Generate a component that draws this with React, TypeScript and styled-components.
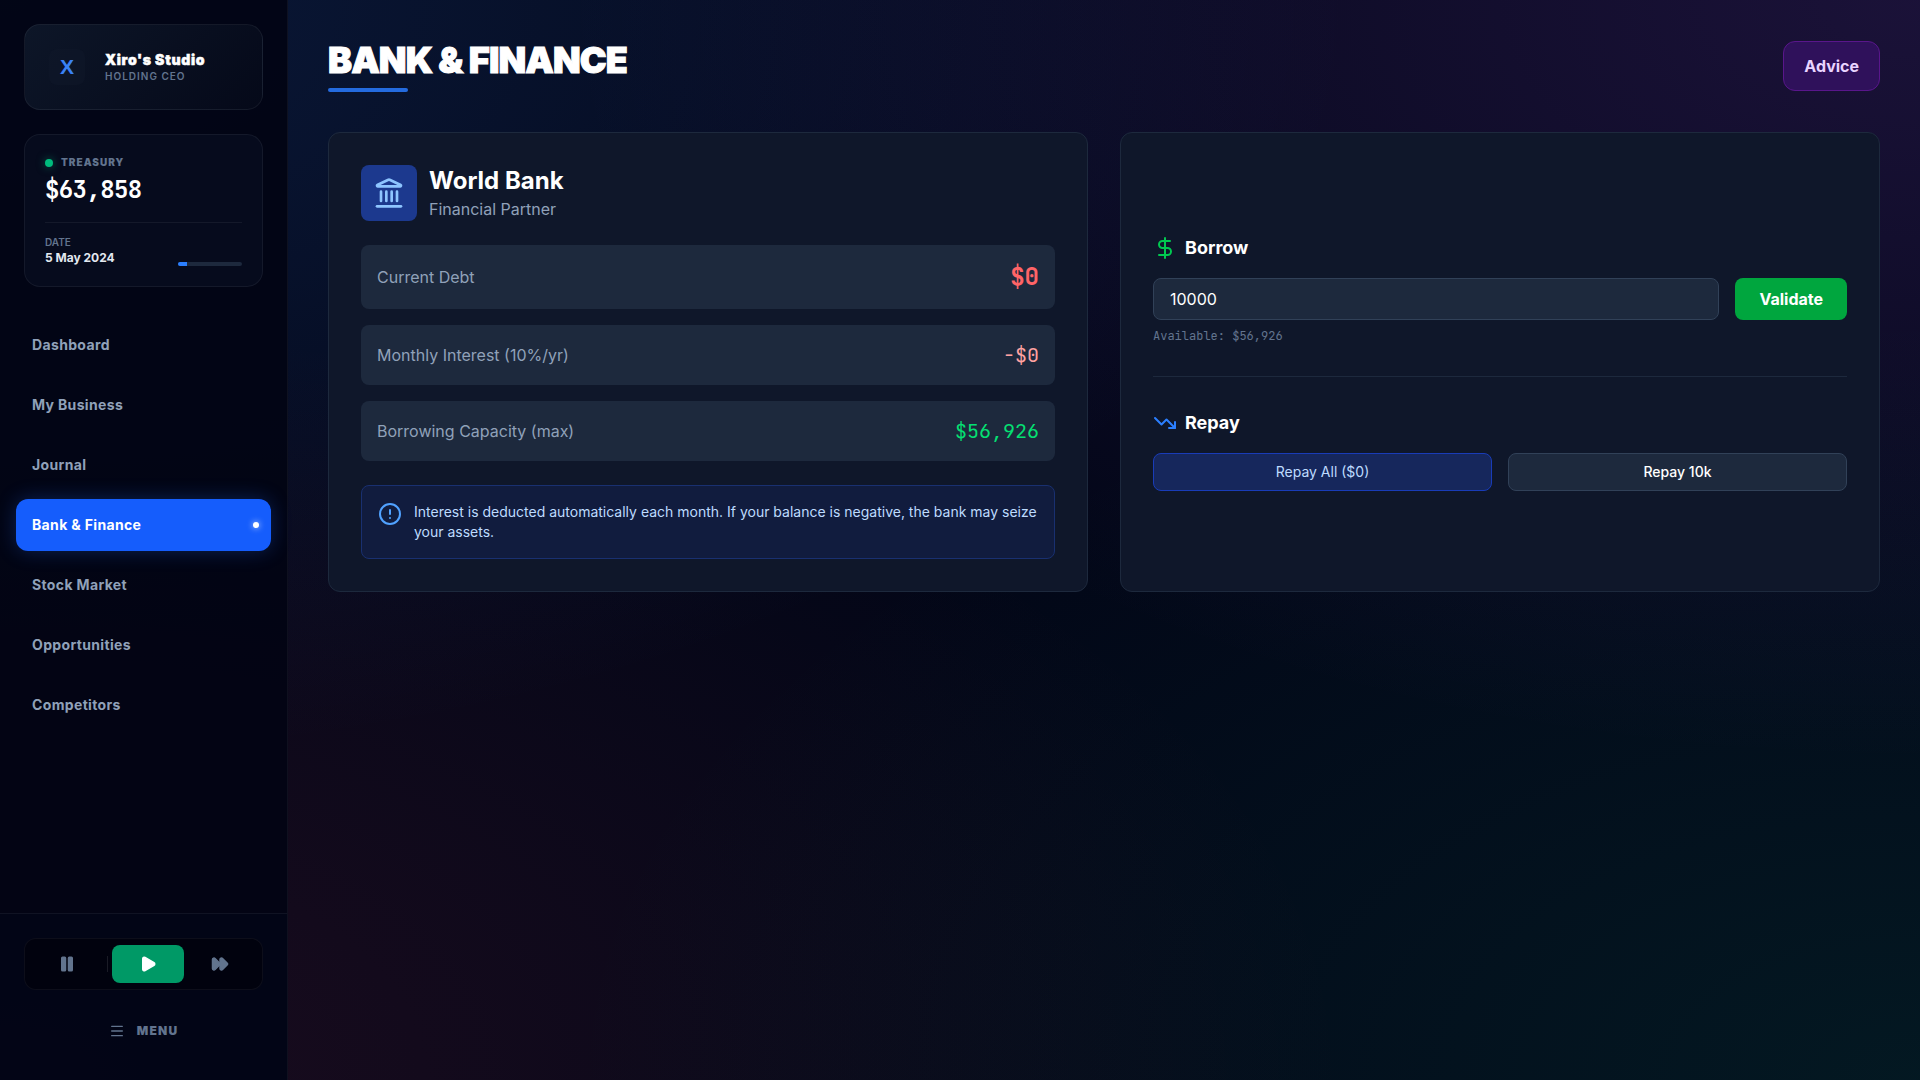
import React, { useState } from "react";
import styled, { createGlobalStyle, css } from "styled-components";
import {
  CircleAlert,
  DollarSign,
  FastForward,
  Landmark,
  Menu,
  Pause,
  Play,
  TrendingDown,
} from "lucide-react";

const sans = `Inter, "Noto Sans", sans-serif`;
const mono = `"JetBrains Mono", "DejaVu Sans Mono", "Liberation Mono", monospace`;

const GlobalStyle = createGlobalStyle`
  *, *::before, *::after { box-sizing: border-box; }
  body {
    margin: 0;
    background-color: #020617;
    color: #f8fafc;
    font-family: ${sans};
    font-size: 16px;
    line-height: 24px;
  }
  h1, h2, h3, p, dl, dt, dd { margin: 0; }
  button, input { font: inherit; color: inherit; margin: 0; }
  button { cursor: pointer; border: 0; background: none; padding: 0; }
`;

const Shell = styled.div`
  display: flex;
  min-height: 100vh;
  background-color: #020617;
  background-image:
    radial-gradient(at 0% 0%, rgba(59, 130, 246, 0.15) 0, transparent 50%),
    radial-gradient(at 100% 0%, rgba(168, 85, 247, 0.15) 0, transparent 50%),
    radial-gradient(at 100% 100%, rgba(16, 185, 129, 0.1) 0, transparent 50%),
    radial-gradient(at 0% 100%, rgba(244, 63, 94, 0.1) 0, transparent 50%);
`;

const Sidebar = styled.aside`
  position: sticky;
  top: 0;
  display: flex;
  flex-direction: column;
  flex: 0 0 288px;
  height: 100vh;
  background: rgba(2, 4, 20, 0.92);
  border-right: 1px solid rgba(255, 255, 255, 0.05);
`;

const SidebarTop = styled.div`
  display: flex;
  flex-direction: column;
  gap: 24px;
  padding: 24px 24px 32px;
`;

const CompanyCard = styled.section`
  display: flex;
  align-items: center;
  gap: 20px;
  padding: 24px;
  border: 1px solid rgba(255, 255, 255, 0.06);
  border-radius: 16px;
  background: linear-gradient(135deg, #0d1628, #050919);
`;

const CompanyLogo = styled.div`
  display: grid;
  place-items: center;
  width: 36px;
  height: 36px;
  border-radius: 8px;
  background: rgba(15, 23, 42, 0.5);
  color: #3b82f6;
  font: 700 21px/24px "Liberation Sans", Arial, sans-serif;
`;

const CompanyName = styled.div`
  color: #fff;
  font-size: 14px;
  font-weight: 900;
  line-height: 18px;
  letter-spacing: 0.05em;
  -webkit-text-stroke: 0.5px currentColor;
`;

const Caption = styled.div<{ $heavy?: boolean; $spaced?: boolean }>`
  color: #62748e;
  font-size: 10px;
  font-weight: ${(p) => (p.$heavy ? 900 : 600)};
  line-height: 15px;
  letter-spacing: ${(p) => (p.$spaced ? "0.1em" : "normal")};
  text-transform: uppercase;
`;

const TreasuryCard = styled.section`
  padding: 20px;
  border: 1px solid rgba(255, 255, 255, 0.06);
  border-radius: 16px;
  background: #060b1d;
`;

const TreasuryLabel = styled.div`
  display: flex;
  align-items: center;
  gap: 8px;
  margin-bottom: 4px;
`;

const StatusDot = styled.span`
  width: 8px;
  height: 8px;
  border-radius: 50%;
  background: #00bc7d;
  box-shadow: 0 0 8px rgba(0, 188, 125, 0.5);
`;

const Balance = styled.div`
  color: #fff;
  font-family: ${mono};
  font-size: 24px;
  font-weight: 700;
  line-height: 32px;
  letter-spacing: -0.025em;
`;

const DateRow = styled.div`
  display: flex;
  align-items: flex-end;
  justify-content: space-between;
  margin-top: 16px;
  padding-top: 12px;
  border-top: 1px solid rgba(255, 255, 255, 0.06);
`;

const DateValue = styled.div`
  color: #e2e8f0;
  font-size: 12px;
  font-weight: 700;
  line-height: 16px;
`;

const MonthTrack = styled.div`
  width: 64px;
  height: 4px;
  border-radius: 4px;
  background: #1d293d;
  overflow: hidden;
`;

const MonthFill = styled.div`
  height: 100%;
  background: #2b7fff;
`;

const Nav = styled.nav`
  display: flex;
  flex: 1;
  flex-direction: column;
  gap: 8px;
  padding: 0 16px;
`;

const NavItem = styled.button<{ $active: boolean }>`
  display: flex;
  align-items: center;
  justify-content: space-between;
  padding: 16px 12px 16px 16px;
  border-radius: 12px;
  color: #90a1b9;
  font-size: 14px;
  font-weight: 700;
  line-height: 20px;
  letter-spacing: 0.025em;
  text-align: left;
  ${(p) =>
    p.$active &&
    css`
      background: #155dfc;
      color: #fff;
      box-shadow: 0 0 20px rgba(37, 99, 235, 0.3);
    `}
`;

const ActiveDot = styled.span`
  width: 6px;
  height: 6px;
  border-radius: 50%;
  background: #fff;
  box-shadow: 0 0 6px rgba(255, 255, 255, 0.8);
`;

const SidebarFooter = styled.div`
  display: flex;
  flex-direction: column;
  gap: 16px;
  padding: 24px;
  border-top: 1px solid rgba(255, 255, 255, 0.06);
  background: rgba(2, 6, 23, 0.5);
`;

const SpeedControls = styled.div`
  display: flex;
  align-items: center;
  padding: 6px;
  border: 1px solid rgba(255, 255, 255, 0.05);
  border-radius: 12px;
  background: #01020e;
`;

const SpeedButton = styled.button<{ $active?: boolean }>`
  display: flex;
  flex: 1;
  justify-content: center;
  padding: 10px 0;
  border-radius: 8px;
  background: ${(p) => (p.$active ? "#009966" : "transparent")};
  color: ${(p) => (p.$active ? "#fff" : "#62748e")};
`;

const SpeedDivider = styled.span`
  width: 1px;
  height: 16px;
  margin: 0 4px;
  background: rgba(255, 255, 255, 0.1);
`;

const MenuButton = styled.button`
  display: flex;
  align-items: center;
  justify-content: center;
  gap: 12px;
  padding: 17px 0;
  color: #62748e;
  font-size: 12px;
  font-weight: 900;
  line-height: 16px;
  letter-spacing: 0.1em;
`;

const Main = styled.main`
  flex: 1;
  min-width: 0;
  padding: 40px;
`;

const PageHeader = styled.header`
  display: flex;
  align-items: center;
  justify-content: space-between;
  margin-bottom: 40px;
`;

const PageTitle = styled.h1`
  color: #fff;
  font-size: 36px;
  font-weight: 900;
  line-height: 40px;
  letter-spacing: -0.025em;
  text-transform: uppercase;
  -webkit-text-stroke: 1px currentColor;

  &::after {
    content: "";
    display: block;
    width: 80px;
    height: 4px;
    margin-top: 8px;
    border-radius: 4px;
    background: #246bdf;
  }
`;

const AdviceButton = styled.button`
  padding: 12px 20px;
  border: 1px solid #59168b;
  border-radius: 12px;
  background: #2f115b;
  color: #e9d4ff;
  font-weight: 700;
`;

const Columns = styled.div`
  display: grid;
  grid-template-columns: repeat(auto-fit, minmax(480px, 1fr));
  gap: 32px;
`;

const Card = styled.section<{ $centered?: boolean }>`
  display: flex;
  flex-direction: column;
  justify-content: ${(p) => (p.$centered ? "center" : "flex-start")};
  padding: 32px;
  border: 1px solid #1d293d;
  border-radius: 12px;
  background: #0f172a;
`;

const BankHeader = styled.div`
  display: flex;
  align-items: center;
  gap: 12px;
  margin-bottom: 24px;
`;

const BankIcon = styled.div`
  display: flex;
  padding: 12px;
  border-radius: 8px;
  background: #1c398e;
  color: #8ec5ff;
`;

const BankName = styled.h2`
  color: #fff;
  font-size: 24px;
  font-weight: 700;
  line-height: 32px;
`;

const BankRole = styled.p`
  color: #90a1b9;
`;

const Figures = styled.dl`
  display: flex;
  flex-direction: column;
  gap: 16px;
  margin-bottom: 24px;
`;

const FigureRow = styled.div`
  display: flex;
  align-items: center;
  justify-content: space-between;
  padding: 16px;
  border-radius: 8px;
  background: #1d293d;
`;

const FigureLabel = styled.dt`
  color: #90a1b9;
`;

const FigureValue = styled.dd<{ $color: string; $large?: boolean }>`
  color: ${(p) => p.$color};
  font-family: ${mono};
  font-size: ${(p) => (p.$large ? "24px" : "20px")};
  font-weight: ${(p) => (p.$large ? 700 : 400)};
  line-height: ${(p) => (p.$large ? "32px" : "28px")};
`;

const Notice = styled.div`
  display: flex;
  align-items: flex-start;
  gap: 12px;
  padding: 16px;
  border: 1px solid #193070;
  border-radius: 8px;
  background: #111c3e;
  color: #bedbff;
  font-size: 14px;
  line-height: 20px;

  svg {
    flex: none;
    color: #51a2ff;
  }
`;

const ActionHeading = styled.h3<{ $iconColor: string }>`
  display: flex;
  align-items: center;
  gap: 8px;
  margin-bottom: 16px;
  color: #fff;
  font-size: 18px;
  font-weight: 700;
  line-height: 28px;

  svg {
    color: ${(p) => p.$iconColor};
  }
`;

const ActionRow = styled.div`
  display: flex;
  gap: 16px;
`;

const AmountInput = styled.input`
  flex: 1;
  min-width: 0;
  padding: 8px 16px;
  border: 1px solid #314158;
  border-radius: 8px;
  outline: none;
  background: #1d293d;
  color: #fff;
`;

const ValidateButton = styled.button`
  padding: 0 24px;
  border-radius: 8px;
  background: #00a63e;
  color: #fff;
  font-weight: 700;
`;

const Available = styled.p`
  margin-top: 8px;
  color: #62748e;
  font-family: ${mono};
  font-size: 12px;
  line-height: 16px;
`;

const RepaySection = styled.div`
  margin-top: 32px;
  padding-top: 32px;
  border-top: 1px solid #1d293d;
`;

const RepayButton = styled.button<{ $primary?: boolean }>`
  flex: 1;
  padding: 8px 16px;
  border: 1px solid ${(p) => (p.$primary ? "#193cb8" : "#314158")};
  border-radius: 8px;
  background: ${(p) => (p.$primary ? "#16275c" : "#1d293d")};
  color: ${(p) => (p.$primary ? "#bedbff" : "#fff")};
  font-size: 14px;
  font-weight: ${(p) => (p.$primary ? 400 : 500)};
  line-height: 20px;
`;

const sections = [
  "Dashboard",
  "My Business",
  "Journal",
  "Bank & Finance",
  "Stock Market",
  "Opportunities",
  "Competitors",
];

export default function App() {
  const [active, setActive] = useState("Bank & Finance");
  const [amount, setAmount] = useState("10000");
  const monthProgress = 14;

  return (
    <>
      <GlobalStyle />
      <Shell>
        <Sidebar>
          <SidebarTop>
            <CompanyCard>
              <CompanyLogo>X</CompanyLogo>
              <div>
                <CompanyName>Xiro's Studio</CompanyName>
                <Caption $spaced>Holding CEO</Caption>
              </div>
            </CompanyCard>
            <TreasuryCard>
              <TreasuryLabel>
                <StatusDot />
                <Caption $heavy $spaced>
                  Treasury
                </Caption>
              </TreasuryLabel>
              <Balance>$63,858</Balance>
              <DateRow>
                <div>
                  <Caption>Date</Caption>
                  <DateValue>5 May 2024</DateValue>
                </div>
                <MonthTrack>
                  <MonthFill style={{ width: `${monthProgress}%` }} />
                </MonthTrack>
              </DateRow>
            </TreasuryCard>
          </SidebarTop>
          <Nav>
            {sections.map((name) => (
              <NavItem
                key={name}
                type="button"
                $active={name === active}
                onClick={() => setActive(name)}
              >
                {name}
                {name === active && <ActiveDot />}
              </NavItem>
            ))}
          </Nav>
          <SidebarFooter>
            <SpeedControls>
              <SpeedButton type="button" aria-label="Pause">
                <Pause size={18} fill="currentColor" />
              </SpeedButton>
              <SpeedDivider />
              <SpeedButton type="button" aria-label="Play" $active>
                <Play size={18} fill="currentColor" />
              </SpeedButton>
              <SpeedButton type="button" aria-label="Fast forward">
                <FastForward size={18} fill="currentColor" />
              </SpeedButton>
            </SpeedControls>
            <MenuButton type="button">
              <Menu size={16} />
              MENU
            </MenuButton>
          </SidebarFooter>
        </Sidebar>

        <Main>
          <PageHeader>
            <PageTitle>Bank &amp; Finance</PageTitle>
            <AdviceButton type="button">Advice</AdviceButton>
          </PageHeader>
          <Columns>
            <Card>
              <BankHeader>
                <BankIcon>
                  <Landmark size={32} />
                </BankIcon>
                <div>
                  <BankName>World Bank</BankName>
                  <BankRole>Financial Partner</BankRole>
                </div>
              </BankHeader>
              <Figures>
                <FigureRow>
                  <FigureLabel>Current Debt</FigureLabel>
                  <FigureValue $color="#ff6467" $large>
                    $0
                  </FigureValue>
                </FigureRow>
                <FigureRow>
                  <FigureLabel>Monthly Interest (10%/yr)</FigureLabel>
                  <FigureValue $color="#ffa2a2">-$0</FigureValue>
                </FigureRow>
                <FigureRow>
                  <FigureLabel>Borrowing Capacity (max)</FigureLabel>
                  <FigureValue $color="#05df72">$56,926</FigureValue>
                </FigureRow>
              </Figures>
              <Notice>
                <CircleAlert size={24} />
                <p>
                  Interest is deducted automatically each month. If your balance
                  is negative, the bank may seize your assets.
                </p>
              </Notice>
            </Card>
            <Card $centered>
              <div>
                <ActionHeading $iconColor="#00c950">
                  <DollarSign size={24} />
                  <label htmlFor="borrow-amount">Borrow</label>
                </ActionHeading>
                <ActionRow>
                  <AmountInput
                    id="borrow-amount"
                    type="text"
                    inputMode="numeric"
                    value={amount}
                    onChange={(e) => setAmount(e.target.value)}
                  />
                  <ValidateButton type="button">Validate</ValidateButton>
                </ActionRow>
                <Available>Available: $56,926</Available>
              </div>
              <RepaySection>
                <ActionHeading $iconColor="#2b7fff">
                  <TrendingDown size={24} />
                  Repay
                </ActionHeading>
                <ActionRow>
                  <RepayButton type="button" $primary>
                    Repay All ($0)
                  </RepayButton>
                  <RepayButton type="button">Repay 10k</RepayButton>
                </ActionRow>
              </RepaySection>
            </Card>
          </Columns>
        </Main>
      </Shell>
    </>
  );
}
